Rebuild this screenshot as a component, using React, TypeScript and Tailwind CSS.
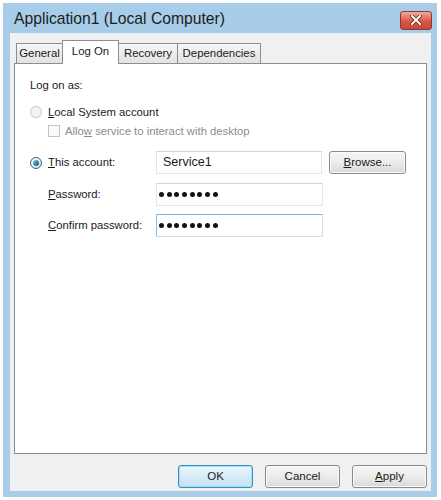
import React from 'react';

const font = { fontFamily: '"Liberation Sans", Arial, sans-serif' };

function Radio({ checked, disabled }: { checked?: boolean; disabled?: boolean }) {
  return (
    <span
      className={`flex items-center justify-center w-[12px] h-[12px] rounded-full border ${
        disabled ? 'border-[#c4c4c4] bg-[#f4f4f4]' : 'border-[#2c628b] bg-gradient-to-br from-[#ffffff] to-[#d6dbe0]'
      }`}
    >
      {checked && <span className="w-[6px] h-[6px] rounded-full bg-gradient-to-br from-[#6ad0f0] to-[#14536f]" />}
    </span>
  );
}

function Field({ value, dots, focused, w = 'w-[167px]' }: { value?: string; dots?: boolean; focused?: boolean; w?: string }) {
  return (
    <div
      className={`${w} h-[23px] flex items-center bg-white border ${dots ? 'pl-[2px]' : 'pl-[6px]'} ${
        focused ? 'border-[#d2e0ea] border-t-[#7fb3d6] border-l-[#8dbbd9]' : 'border-[#e2e6ea] border-t-[#d0d3d8]'
      }`}
    >
      {dots ? (
        <span className="flex gap-[2.7px]">
          {Array.from({ length: 8 }).map((_, i) => (
            <span key={i} className="w-[5px] h-[5px] rounded-full bg-[#111]" />
          ))}
        </span>
      ) : (
        <span className="text-[12.5px] text-[#1a1a1a]">{value}</span>
      )}
    </div>
  );
}

function Btn({ children, primary, w = 'w-[75px]' }: { children: React.ReactNode; primary?: boolean; w?: string }) {
  return (
    <div
      className={`${w} h-[23px] flex items-center justify-center rounded-[3px] text-[11.5px] text-[#1a1a1a] border ${
        primary
          ? 'border-[#3c8fc4] bg-gradient-to-b from-[#eaf6fd] to-[#c4e1f2] shadow-[inset_0_0_0_1px_#9fe0f6]'
          : 'border-[#8a8a8a] bg-gradient-to-b from-[#f5f5f5] via-[#ececec] to-[#d9d9d9] shadow-[inset_0_0_0_1px_#fbfbfb]'
      }`}
    >
      {children}
    </div>
  );
}

function Tab({ label, active, w }: { label: string; active?: boolean; w: string }) {
  return active ? (
    <div className={`${w} h-[24px] -ml-px flex justify-center pt-[2px] bg-white border border-[#8d8d8d] border-b-0 -mb-px relative z-10 text-[11.4px] text-[#1a1a1a]`}>
      {label}
    </div>
  ) : (
    <div className={`${w} h-[20px] -ml-px flex items-center justify-center bg-gradient-to-b from-[#f6f6f6] to-[#e2e2e2] border border-[#8d8d8d] border-b-0 text-[11.4px] text-[#1a1a1a]`}>
      {label}
    </div>
  );
}

export default function App() {
  return (
    <div className="w-[441px] h-[500px] bg-white pt-[3px] pl-[3px]" style={font}>
      <div className="w-[434px] h-[494px] bg-[#a7cde8] flex flex-col pl-[7px] pr-[6px] pb-[6px]">
        <div className="h-[30px] flex items-center justify-between -ml-[3px]">
          <span className="text-[15.7px] text-[#1c1c1c] pl-[7px] pt-[1px]">Application1 (Local Computer)</span>
          <div className="w-[32px] h-[19px] mt-[4px] -mr-[1px] rounded-[3px] border border-[#8a3b33] bg-gradient-to-b from-[#f0aca2] via-[#dc5a4b] to-[#c8443a] flex items-center justify-center">
            <svg width="12" height="10" viewBox="0 0 12 10">
              <path d="M2 1 L10 9 M10 1 L2 9" stroke="#5a2019" strokeWidth="3.4" strokeLinecap="square" />
              <path d="M2 1 L10 9 M10 1 L2 9" stroke="#ffffff" strokeWidth="2" strokeLinecap="square" />
            </svg>
          </div>
        </div>
        <div className="flex-1 bg-[#f0f0f0] flex flex-col px-[4px] pt-[8px]">
          <div className="flex items-end pl-[3px] h-[22px]">
            <Tab label="General" w="w-[47px]" />
            <Tab label="Log On" active w="w-[57px]" />
            <Tab label="Recovery" w="w-[60px]" />
            <Tab label="Dependencies" w="w-[84px]" />
          </div>
          <div className="h-[391px] bg-white border border-[#8d8d8d] pl-[15px] pt-[13px] text-[11.3px] text-[#1a1a1a]">
            <div className="h-[16px] flex items-center">Log on as:</div>
            <div className="h-[16px] mt-[11px] flex items-center gap-[6px]">
              <Radio disabled />
              <span>
                <u>L</u>ocal System account
              </span>
            </div>
            <div className="h-[16px] mt-[3px] pl-[18px] flex items-center gap-[5px] text-[#8c8c8c]">
              <span className="w-[12px] h-[12px] border border-[#c4c4c4] bg-[#fafafa]" />
              <span>
                Allo<u>w</u> service to interact with desktop
              </span>
            </div>
            <div className="mt-[12px] flex items-center">
              <div className="w-[126px] flex items-center gap-[6px] h-[23px]">
                <Radio checked />
                <span>
                  <u>T</u>his account:
                </span>
              </div>
              <Field value="Service1" w="w-[166px]" />
              <div className="ml-[7px]">
                <Btn w="w-[77px]">
                  <span>
                    <u>B</u>rowse...
                  </span>
                </Btn>
              </div>
            </div>
            <div className="mt-[9px] flex items-center">
              <div className="w-[126px] pl-[18px]">
                <u>P</u>assword:
              </div>
              <Field dots />
            </div>
            <div className="mt-[8px] flex items-center">
              <div className="w-[126px] pl-[18px]">
                <u>C</u>onfirm password:
              </div>
              <Field dots focused />
            </div>
          </div>
          <div className="flex justify-end gap-[12px] mt-[11px]">
            <Btn primary>OK</Btn>
            <Btn>Cancel</Btn>
            <Btn>
              <span>
                <u>A</u>pply
              </span>
            </Btn>
          </div>
        </div>
      </div>
    </div>
  );
}
